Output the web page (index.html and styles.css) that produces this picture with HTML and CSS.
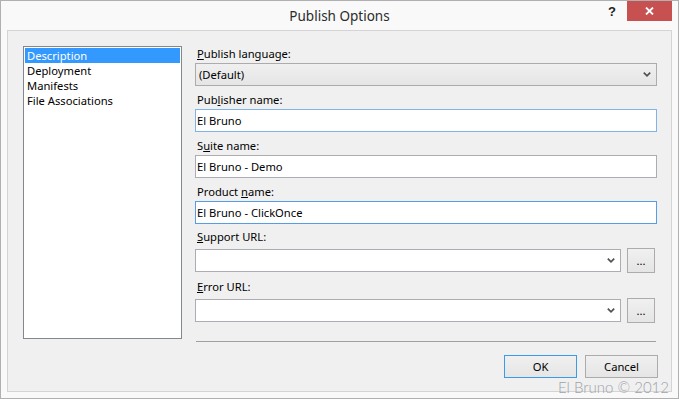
FILE: index.html
```html
<!DOCTYPE html>
<html lang="en">
<head>
  <meta charset="UTF-8">
  <title>Publish Options</title>
  <link rel="stylesheet" href="styles.css">
</head>
<body>
  <div class="window">
    <div class="titlebar">
      <div></div>
      <div class="title">Publish Options</div>
      <div class="controls">
        <span class="help">?</span>
        <span class="close">
          <svg width="9" height="8" viewBox="0 0 9 8"><path d="M1 0.5 L8 7.5 M8 0.5 L1 7.5" stroke="#fff" stroke-width="1.8" fill="none"/></svg>
        </span>
      </div>
    </div>

    <div class="client">
      <ul class="listbox">
        <li class="selected">Description</li>
        <li>Deployment</li>
        <li>Manifests</li>
        <li>File Associations</li>
      </ul>

      <div class="form">
        <div class="field">
          <label><u>P</u>ublish language:</label>
          <div class="combo readonly">
            <span>(Default)</span>
            <svg class="chevron" width="8" height="5" viewBox="0 0 8 5"><path d="M0.8 0.6 L4 3.8 L7.2 0.6" stroke="#505050" stroke-width="1.7" fill="none"/></svg>
          </div>
        </div>
        <div class="field">
          <label>Pub<u>l</u>isher name:</label>
          <div class="textbox hover">El Bruno</div>
        </div>
        <div class="field">
          <label>S<u>u</u>ite name:</label>
          <div class="textbox">El Bruno - Demo</div>
        </div>
        <div class="field">
          <label>Product <u>n</u>ame:</label>
          <div class="textbox focus">El Bruno - ClickOnce</div>
        </div>
        <div class="field url support">
          <label><u>S</u>upport URL:</label>
          <div class="row">
            <div class="combo editable">
              <span></span>
              <svg class="chevron" width="8" height="5" viewBox="0 0 8 5"><path d="M0.8 0.6 L4 3.8 L7.2 0.6" stroke="#505050" stroke-width="1.7" fill="none"/></svg>
            </div>
            <button class="browse">...</button>
          </div>
        </div>
        <div class="field url error">
          <label><u>E</u>rror URL:</label>
          <div class="row">
            <div class="combo editable">
              <span></span>
              <svg class="chevron" width="8" height="5" viewBox="0 0 8 5"><path d="M0.8 0.6 L4 3.8 L7.2 0.6" stroke="#505050" stroke-width="1.7" fill="none"/></svg>
            </div>
            <button class="browse">...</button>
          </div>
        </div>

        <div class="separator"></div>

        <div class="actions">
          <button class="btn default">OK</button>
          <button class="btn">Cancel</button>
        </div>
      </div>
    </div>

    <div class="watermark">El Bruno © 2012</div>
  </div>
</body>
</html>
```

FILE: styles.css
```css
* {
  box-sizing: border-box;
}

body {
  margin: 0;
  padding: 0;
  font-family: 'Noto Sans', 'Liberation Sans', sans-serif;
  font-size: 11.2px;
  color: #000;
  background: #fff;
}

.window {
  position: relative;
  width: 679px;
  height: 399px;
  border: 1px solid #b0b0b0;
  background: #f9f9f9;
}

.titlebar {
  height: 29px;
  display: grid;
  grid-template-columns: 1fr auto 1fr;
  align-items: start;
}

.title {
  font-size: 13.5px;
  color: #2b2b2b;
  line-height: 30px;
}

.controls {
  display: flex;
  justify-content: flex-end;
  align-items: flex-start;
  padding-right: 6px;
}

.help {
  font-family: 'Liberation Sans', sans-serif;
  font-weight: bold;
  font-size: 13px;
  color: #222;
  line-height: 22px;
  margin-right: 11px;
}

.close {
  width: 45px;
  height: 20px;
  background: #c75050;
  display: flex;
  align-items: center;
  justify-content: center;
}

.client {
  margin: 0 6px;
  height: 362px;
  background: #f0f0f0;
  border: 1px solid #d4d4d4;
  padding: 15px 0 0 15px;
  display: flex;
  align-items: flex-start;
}

.listbox {
  list-style: none;
  margin: 0;
  padding: 1px;
  width: 159px;
  height: 293px;
  background: #fff;
  border: 1px solid #828790;
}

.listbox li {
  height: 15px;
  line-height: 15px;
  padding-left: 2px;
}

.listbox li.selected {
  background: #3399ff;
  color: #fff;
}

.form {
  margin-left: 13px;
  width: 462px;
  display: flex;
  flex-direction: column;
}

.field {
  margin-bottom: 6px;
}

.field label {
  display: block;
  height: 16px;
  line-height: 16px;
  padding-left: 2px;
  margin-bottom: 1px;
}

.field.support {
  margin-top: -1px;
}

.field.url label {
  margin-bottom: 3px;
}

.field.error {
  margin-top: 0;
  margin-bottom: 0;
}

.textbox,
.combo {
  height: 23px;
  line-height: 21px;
  border: 1px solid #abadb3;
  background: #fff;
  padding-left: 1px;
}

.textbox.hover {
  border-color: #7eb4ea;
}

.textbox.focus {
  border-color: #569de5;
}

.combo {
  display: flex;
  align-items: center;
  justify-content: space-between;
  padding-right: 5px;
}

.combo.readonly {
  background: linear-gradient(#f0f0f0, #e5e5e5);
  border-color: #acacac;
  padding-left: 3px;
}

.chevron {
  display: block;
}

.row {
  display: flex;
  align-items: center;
  height: 25px;
}

.row .combo {
  width: 426px;
}

.browse,
.btn {
  font-family: inherit;
  font-size: 11.2px;
  color: #000;
  border: 1px solid #acacac;
  background: linear-gradient(#f0f0f0, #e5e5e5);
  padding: 0;
}

.browse {
  width: 28px;
  height: 25px;
  margin-left: 6px;
  line-height: 20px;
}

.separator {
  height: 1px;
  margin: 18px 1px 0 1px;
  background: #a0a0a0;
}

.actions {
  display: flex;
  justify-content: flex-end;
  gap: 8px;
  margin-top: 13px;
  margin-right: -1px;
}

.btn {
  width: 73px;
  height: 23px;
}

.btn.default {
  border-color: #3c9be8;
}

.watermark {
  position: absolute;
  right: 9px;
  bottom: 1px;
  font-family: 'Lato', 'Noto Sans', sans-serif;
  font-weight: 300;
  font-size: 15px;
  color: #9ea3aa;
  line-height: 20px;
}
```
